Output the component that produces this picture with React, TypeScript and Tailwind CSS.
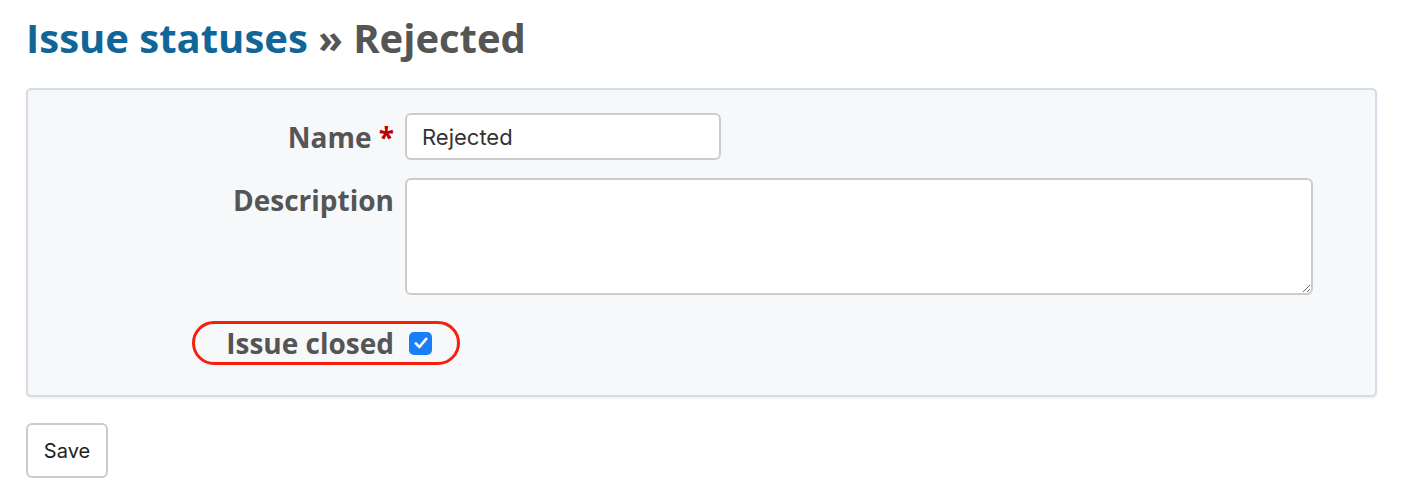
export default function App() {
  return (
    <div className="min-h-[502px] bg-white px-[26px] pt-[12px] text-[#555]" style={{ fontFamily: '"Open Sans", "Noto Sans", sans-serif' }}>
      <h2 className="text-[40px] font-bold leading-[52px] text-[#555]">
        <span className="text-[#169]">Issue statuses</span> » Rejected
      </h2>

      <div className="mt-[24px] w-[1351px] rounded-[5px] border-2 border-[#d6dce5] bg-[#f7f8fa] pb-[32px] pt-[23px] shadow-[0_2px_3px_rgba(0,0,0,0.06)]">
        <div className="grid grid-cols-[366px_1fr] items-center gap-x-[11px] gap-y-[18px]">
          <label className="text-right text-[28px] font-bold leading-[46px]">
            Name <span className="text-[#bb0000]">*</span>
          </label>
          <div>
            <input
              readOnly
              value="Rejected"
              className="h-[47px] w-[316px] rounded-[6px] border-2 border-[#cccccc] bg-white px-[15px] text-[22px] text-[#333] outline-none"
              style={{ fontFamily: 'Inter, "Liberation Sans", sans-serif' }}
            />
          </div>

          <label className="self-start text-right text-[28px] font-bold leading-[44px]">Description</label>
          <div>
            <textarea readOnly className="block h-[117px] w-[908px] rounded-[6px] border-2 border-[#cccccc] bg-white outline-none" />
          </div>

          <div className="relative col-span-2 mt-[10px] flex h-[40px] items-center">
            <div className="w-[366px] text-right text-[28px] font-bold leading-[40px]">Issue closed</div>
            <div className="ml-[15px] flex h-[23px] w-[23px] items-center justify-center rounded-[5px] bg-[#1a7ef5]">
              <svg width="14" height="12" viewBox="0 0 14 12" fill="none">
                <path d="M1.8 6.4 L5.4 10 L12.2 1.8" stroke="white" strokeWidth="2.6" strokeLinecap="round" strokeLinejoin="round" />
              </svg>
            </div>
            <div className="pointer-events-none absolute left-[164px] top-[-2px] h-[44px] w-[268px] rounded-full border-[3px] border-[#f5200c]" />
          </div>
        </div>
      </div>

      <button
        className="mt-[26px] h-[55px] w-[82px] rounded-[6px] border-2 border-[#cccccc] bg-white text-[20px] text-[#222]"
        style={{ fontFamily: 'Inter, "Liberation Sans", sans-serif' }}
      >
        Save
      </button>
    </div>
  );
}
